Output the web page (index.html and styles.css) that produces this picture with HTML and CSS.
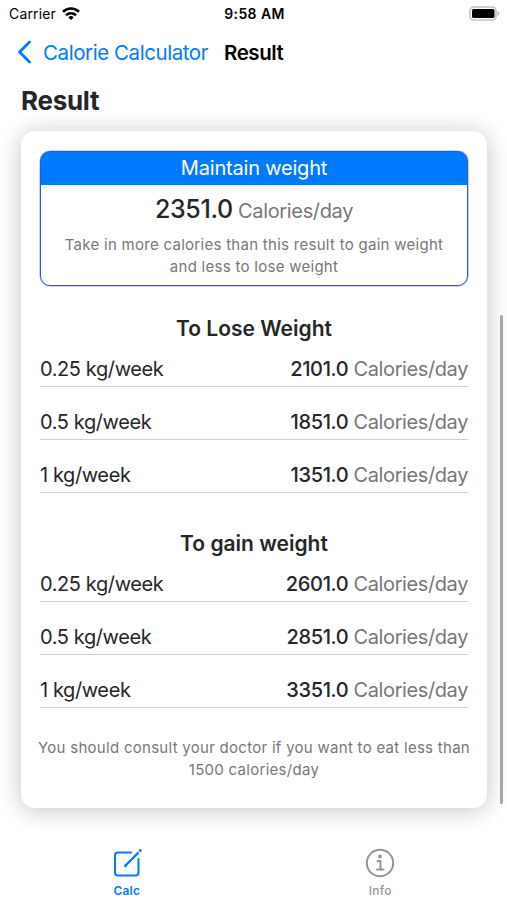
FILE: index.html
```html
<!DOCTYPE html>
<html lang="en">
<head>
    <meta charset="UTF-8">
    <meta name="viewport" content="width=device-width, initial-scale=1.0">
    <title>Calorie Calculator</title>
    <link rel="stylesheet" href="styles.css">
</head>
<body>
    <header class="status-bar">
        <div class="carrier">
            <span>Carrier</span>
            <svg width="18" height="13" viewBox="0 0 18 13" fill="none" stroke="#000" stroke-width="2.6">
                <path d="M1 4.8a11.5 11.5 0 0 1 16 0"/>
                <path d="M4 8.2a7.2 7.2 0 0 1 10 0"/>
                <path d="M9 13L6.3 10.4a3.9 3.9 0 0 1 5.4 0z" fill="#000" stroke="none"/>
            </svg>
        </div>
        <span class="time">9:58 AM</span>
        <svg class="battery" width="31" height="15" viewBox="0 0 31 15">
            <rect x="1" y="1" width="26" height="13" rx="3.5" fill="none" stroke="#c2c2c2" stroke-width="1.6"/>
            <rect x="3" y="3" width="22.5" height="9" rx="1.5"/>
            <path d="M28.5 5c2.3 1 2.3 4 0 5z" fill="#b5b5b5"/>
        </svg>
    </header>

    <nav class="nav-bar">
        <svg width="15" height="24" viewBox="0 0 15 24" fill="none" stroke="#007aff" stroke-width="2.8" stroke-linecap="round" stroke-linejoin="round">
            <path d="M12.5 2L2.5 12l10 10"/>
        </svg>
        <a class="back">Calorie Calculator</a>
        <span class="nav-title">Result</span>
    </nav>

    <main>
        <h1>Result</h1>
        <div class="card">
            <section class="maintain">
                <h2>Maintain weight</h2>
                <p class="total"><b>2351.0</b> <span>Calories/day</span></p>
                <p class="hint">Take in more calories than this result to gain weight<br>and less to lose weight</p>
            </section>

            <section class="plan lose">
                <h3>To Lose Weight</h3>
                <div class="row"><span class="rate">0.25 kg/week</span><span class="value"><b>2101.0</b> <span>Calories/day</span></span></div>
                <div class="row"><span class="rate">0.5 kg/week</span><span class="value"><b>1851.0</b> <span>Calories/day</span></span></div>
                <div class="row"><span class="rate">1 kg/week</span><span class="value"><b>1351.0</b> <span>Calories/day</span></span></div>
            </section>

            <section class="plan gain">
                <h3>To gain weight</h3>
                <div class="row"><span class="rate">0.25 kg/week</span><span class="value"><b>2601.0</b> <span>Calories/day</span></span></div>
                <div class="row"><span class="rate">0.5 kg/week</span><span class="value"><b>2851.0</b> <span>Calories/day</span></span></div>
                <div class="row"><span class="rate">1 kg/week</span><span class="value"><b>3351.0</b> <span>Calories/day</span></span></div>
            </section>

            <p class="note">You should consult your doctor if you want to eat less than<br>1500 calories/day</p>
        </div>
    </main>
    <div class="scrollbar"></div>

    <footer class="tab-bar">
        <div class="tab active">
            <svg width="30" height="30" viewBox="0 0 30 30" fill="none" stroke="currentColor" stroke-width="2.1" stroke-linecap="round" stroke-linejoin="round">
                <path d="M19 4.5H6Q3 4.500 3 7.500v17Q3 27.500 6 27.500h17.500Q26.500 27.500 26.500 24.500V11"/>
                <path d="M13.500 17.500L26 5" stroke-width="2.4"/>
                <path d="M12.500 18.800l.6-2.200 1.500 1.500z" fill="currentColor" stroke-width="0.600"/>
                <path d="M28.200 2.600l.1-.1" stroke-width="2.800"/>
            </svg>
            <span>Calc</span>
        </div>
        <div class="tab">
            <svg width="30" height="30" viewBox="0 0 30 30" fill="none" stroke="currentColor" stroke-width="2" stroke-linecap="round" stroke-linejoin="round">
                <circle cx="15" cy="15" r="13.2"/>
                <path d="M12.500 13h3v8.500M12 21.500h6.500"/>
                <circle cx="15" cy="8.500" r="1.9" fill="currentColor" stroke="none"/>
            </svg>
            <span>Info</span>
        </div>
    </footer>
</body>
</html>
```
FILE: styles.css
```css
* {
    box-sizing: border-box;
}

body {
    font-family: Inter, 'Liberation Sans', sans-serif;
    background-color: #fff;
    color: #262628;
    height: 900px;
    margin: 0;
    overflow: hidden;
    display: flex;
    flex-direction: column;
}

h1, h2, h3, p {
    margin: 0;
}

svg {
    display: block;
    flex: none;
}

b {
    font-weight: 600;
}

.status-bar {
    display: grid;
    grid-template-columns: 1fr auto 1fr;
    align-items: center;
    height: 27px;
    padding: 0 7px 0 9px;
    font-size: 14px;
    color: #000;
}

.carrier {
    display: flex;
    align-items: center;
    gap: 6px;
    letter-spacing: 0.15px;
}

.time {
    font-weight: 600;
    letter-spacing: 0.4px;
}

.battery {
    justify-self: end;
}

.nav-bar {
    display: flex;
    align-items: center;
    height: 50px;
    padding-left: 17px;
    font-size: 20.5px;
    letter-spacing: -0.43px;
}

.back {
    color: #007aff;
    margin-left: 11px;
}

.nav-title {
    font-weight: 600;
    color: #000;
    margin-left: 16px;
}

main {
    padding: 8px 20px 0 21px;
}

h1 {
    font-size: 26px;
    font-weight: 700;
    line-height: 32px;
    letter-spacing: -0.3px;
}

.card {
    margin-top: 14px;
    height: 677px;
    padding: 20px 19px 0;
    border-radius: 14px;
    background: #fff;
    box-shadow: 0 2px 24px rgba(0, 0, 0, 0.24);
}

.maintain {
    height: 135px;
    border: 1px solid #2f50f0;
    border-radius: 10px;
    box-shadow: 0 0 0 0.5px rgba(47, 80, 240, 0.5);
    overflow: hidden;
    text-align: center;
    background: linear-gradient(#007aff 33px, #fff 33px);
}

h2 {
    height: 32px;
    line-height: 32px;
    color: #fff;
    font-size: 20px;
    font-weight: 400;
    letter-spacing: -0.2px;
}

.total {
    height: 50px;
    line-height: 51px;
    font-size: 20px;
    letter-spacing: -0.35px;
    color: #77777a;
}

.total b {
    font-size: 25px;
    font-weight: 500;
    color: #262628;
}

.hint, .note {
    font-size: 15px;
    line-height: 22px;
    letter-spacing: 0.28px;
    color: #77777a;
    text-align: center;
    white-space: nowrap;
}

.plan {
    height: 215px;
    padding-top: 30px;
}

h3 {
    height: 26px;
    line-height: 26px;
    font-size: 21px;
    font-weight: 600;
    text-align: center;
}

.row {
    display: flex;
    justify-content: space-between;
    height: 53px;
    padding-top: 21px;
    line-height: 29px;
    font-size: 20px;
    letter-spacing: -0.4px;
    border-bottom: 1px solid #cfcfd2;
}

h3 + .row {
    height: 45px;
    padding-top: 13px;
}

.value {
    color: #77777a;
}

.value b {
    color: #262628;
    font-weight: 550;
    letter-spacing: -0.35px;
}

.note {
    display: flex;
    justify-content: center;
    margin-top: 21px;
}

.scrollbar {
    position: absolute;
    right: 4px;
    top: 315px;
    width: 3px;
    height: 489px;
    border-radius: 2px;
    background: #a6a6a6;
}

.tab-bar {
    display: flex;
    margin-top: auto;
    height: 52px;
}

.tab {
    flex: 1;
    display: flex;
    flex-direction: column;
    align-items: center;
    gap: 5px;
    color: #959595;
    font-size: 12px;
    font-weight: 500;
    letter-spacing: 0.2px;
}

.active {
    color: #007aff;
    font-weight: 600;
}
```
